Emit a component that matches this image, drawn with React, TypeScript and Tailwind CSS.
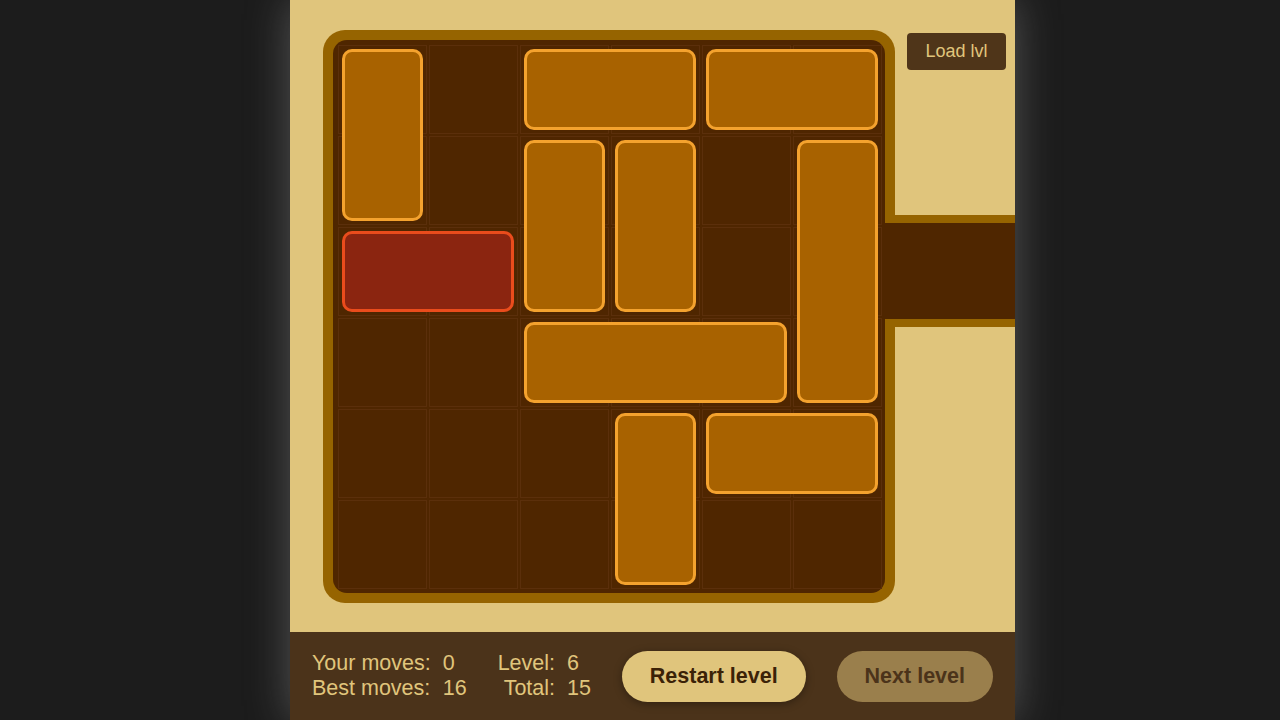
const pieces = [
  { pos: 'col-start-1 row-start-1 row-span-2', red: false },
  { pos: 'col-start-3 col-span-2 row-start-1', red: false },
  { pos: 'col-start-5 col-span-2 row-start-1', red: false },
  { pos: 'col-start-3 row-start-2 row-span-2', red: false },
  { pos: 'col-start-4 row-start-2 row-span-2', red: false },
  { pos: 'col-start-6 row-start-2 row-span-3', red: false },
  { pos: 'col-start-1 col-span-2 row-start-3', red: true },
  { pos: 'col-start-3 col-span-3 row-start-4', red: false },
  { pos: 'col-start-4 row-start-5 row-span-2', red: false },
  { pos: 'col-start-5 col-span-2 row-start-5', red: false },
]

function Board() {
  return (
    <div className="relative h-[573px] w-[572px] rounded-[22px] bg-[#966400] p-[10px]">
      <div className="h-full w-full rounded-[14px] bg-[#4f2600] p-[3px] pl-[4px] pt-[4px]">
        <div className="grid h-[546px] w-[546px] grid-cols-6 grid-rows-6">
          {Array.from({ length: 36 }).map((_, i) => (
            <div
              key={i}
              className="m-px border border-[#5b2f0b]"
              style={{ gridColumn: (i % 6) + 1, gridRow: Math.floor(i / 6) + 1 }}
            />
          ))}
          {pieces.map((p, i) => (
            <div
              key={'p' + i}
              className={`${p.pos} m-[5px] rounded-[10px] border-[3px] ${
                p.red ? 'border-[#ea4c1c] bg-[#8b2510]' : 'border-[#f4a22e] bg-[#a86200]'
              }`}
            />
          ))}
        </div>
      </div>
      {/* exit channel */}
      <div className="absolute left-[562px] top-[185px] h-[112px] w-[130px] border-y-[8px] border-[#966400] bg-[#4f2600]" />
    </div>
  )
}

export default function App() {
  return (
    <div className="h-screen min-h-[720px] w-full overflow-hidden bg-[#1c1c1c] font-['Liberation_Sans',Arial,sans-serif]">
      <div className="ml-[290px] flex h-full w-[725px] flex-col overflow-hidden bg-[#e0c57c] shadow-[0_0_40px_rgba(150,150,150,0.45)]">
        <div className="flex h-[632px] items-start">
          <div className="ml-[33px] mt-[30px]">
            <Board />
          </div>
          <button className="ml-[12px] mt-[33px] h-[37px] w-[99px] rounded-[4px] bg-[#4f3519] text-[18px] text-[#e0c57c]">
            Load lvl
          </button>
        </div>
        <div className="flex h-[88px] items-center justify-between bg-[#4b331a] px-[22px]">
          <div className="flex gap-[31px] text-[21.5px] leading-[25px] text-[#e0c57c]">
            <div className="grid grid-cols-[auto_auto] gap-x-[12px]">
              <span>Your moves:</span>
              <span>0</span>
              <span>Best moves:</span>
              <span>16</span>
            </div>
            <div className="grid grid-cols-[auto_auto] gap-x-[12px]">
              <span className="text-right">Level:</span>
              <span>6</span>
              <span className="text-right">Total:</span>
              <span>15</span>
            </div>
          </div>
          <button className="h-[51px] rounded-full bg-[#e0c57c] px-[28px] text-[21.5px] font-bold text-[#3b2207] shadow-[0_2px_8px_rgba(0,0,0,0.35)]">
            Restart level
          </button>
          <button className="h-[51px] rounded-full bg-[#9a7f4c] px-[28px] text-[21.5px] font-bold text-[#4b331a]">
            Next level
          </button>
        </div>
      </div>
    </div>
  )
}
